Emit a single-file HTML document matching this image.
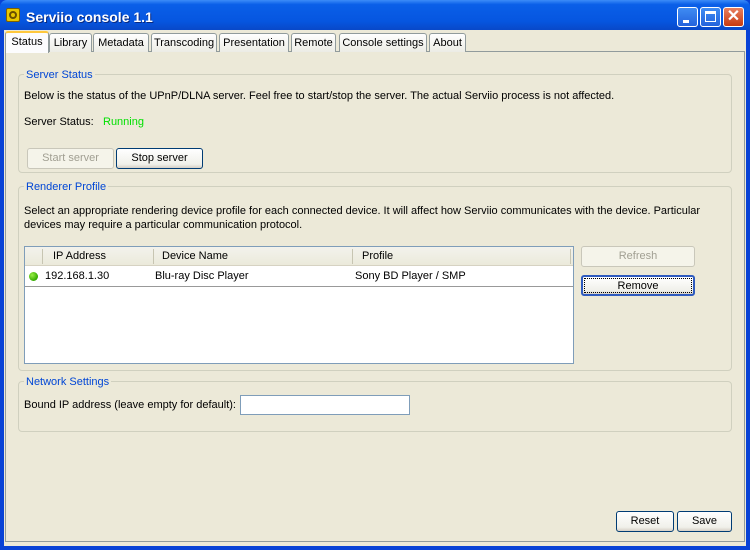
<!DOCTYPE html>
<html><head><style>
*{box-sizing:border-box;margin:0;padding:0}
body{width:750px;height:550px;overflow:hidden;font:11px "Liberation Sans",sans-serif;color:#000;background:#0842d6;position:relative}
.a{position:absolute}
#title{left:0;top:0;width:750px;height:30px;background:linear-gradient(#3c8cf8 0,#0a5fe8 15%,#0656e0 70%,#0848c8 100%);border-radius:7px 7px 0 0}
#client{left:4px;top:30px;width:742px;height:516px;background:#ece9d8}
.wb{top:7px;width:21px;height:20px;border:1px solid #fff;border-radius:3px;background:linear-gradient(#3f8cf3,#2463dc)}
.tab{top:33px;height:19px;border:1px solid #919b9c;border-bottom:none;border-radius:3px 3px 0 0;background:linear-gradient(#fff,#ececE5);text-align:center;line-height:18px}
.grp{border:1px solid #d0d0bf;border-radius:4px}
.gt{background:#ece9d8;color:#0046d5;padding:0 2px}
.btn{height:21px;border:1px solid #003c74;border-radius:3px;background:linear-gradient(#fff,#f0f0ea 80%,#d6d0c5);text-align:center;line-height:19px}
.dis{border-color:#c9c7ba;color:#a19f92;background:#f5f4ea}
</style></head><body>
<div id="title" class="a"></div>
<div class="a" style="left:6px;top:8px;width:14px;height:14px;background:#e8c800;border:1px solid #806000;border-radius:2px"><div style="margin:2px;width:8px;height:8px;border:2px solid #6a5000;border-radius:50%"></div></div>
<div class="a" style="left:26px;top:9px;color:#fff;font-weight:bold;font-size:14px;text-shadow:1px 1px #0a2a80">Serviio console 1.1</div>
<div class="a wb" style="left:677px"><div class="a" style="left:5px;top:12px;width:6px;height:3px;background:#fff"></div></div>
<div class="a wb" style="left:700px"><div class="a" style="left:4px;top:3px;width:11px;height:11px;border:1px solid #fff;border-top-width:3px"></div></div>
<div class="a wb" style="left:723px;background:linear-gradient(#e88060,#c83a10);color:#fff;font-size:16px;font-weight:bold;text-align:center;line-height:18px">✕</div>
<div id="client" class="a"></div>
<div class="a" style="left:5px;top:51px;width:740px;height:491px;border:1px solid #919b9c;background:#ece9d8"></div>
<div class="a tab" style="left:49px;width:43px">Library</div>
<div class="a tab" style="left:93px;width:56px">Metadata</div>
<div class="a tab" style="left:151px;width:66px">Transcoding</div>
<div class="a tab" style="left:219px;width:70px">Presentation</div>
<div class="a tab" style="left:291px;width:45px">Remote</div>
<div class="a tab" style="left:339px;width:88px">Console settings</div>
<div class="a tab" style="left:429px;width:37px">About</div>
<div class="a tab" style="left:5px;top:31px;width:44px;height:22px;background:#fcfcfe;border-top:2px solid #ffc83c;line-height:18px">Status</div>

<div class="a grp" style="left:18px;top:74px;width:714px;height:99px"></div>
<div class="a gt" style="left:24px;top:69px">Server Status</div>
<div class="a" style="left:24px;top:90px">Below is the status of the UPnP/DLNA server. Feel free to start/stop the server. The actual Serviio process is not affected.</div>
<div class="a" style="left:24px;top:116px">Server Status:</div>
<div class="a" style="left:103px;top:116px;color:#00e000">Running</div>
<div class="a btn dis" style="left:27px;top:148px;width:87px">Start server</div>
<div class="a btn" style="left:116px;top:148px;width:87px">Stop server</div>

<div class="a grp" style="left:18px;top:186px;width:714px;height:185px"></div>
<div class="a gt" style="left:24px;top:181px">Renderer Profile</div>
<div class="a" style="left:24px;top:204px;width:686px;line-height:14px">Select an appropriate rendering device profile for each connected device. It will affect how Serviio communicates with the device. Particular devices may require a particular communication protocol.</div>
<div class="a" style="left:24px;top:246px;width:550px;height:118px;border:1px solid #7f9db9;background:#fff"></div>
<div class="a" style="left:25px;top:247px;width:548px;height:19px;background:linear-gradient(#f3f2ec,#ebeadb);border-bottom:1px solid #d6d2c2"></div>
<div class="a" style="left:42px;top:249px;width:1px;height:15px;background:#c7c5b2"></div>
<div class="a" style="left:153px;top:249px;width:1px;height:15px;background:#c7c5b2"></div>
<div class="a" style="left:352px;top:249px;width:1px;height:15px;background:#c7c5b2"></div>
<div class="a" style="left:570px;top:249px;width:1px;height:15px;background:#c7c5b2"></div>
<div class="a" style="left:53px;top:250px">IP Address</div>
<div class="a" style="left:162px;top:250px">Device Name</div>
<div class="a" style="left:362px;top:250px">Profile</div>
<div class="a" style="left:25px;top:286px;width:548px;height:1px;background:#999"></div>
<div class="a" style="left:29px;top:272px;width:9px;height:9px;border-radius:50%;background:radial-gradient(circle at 35% 35%,#9e4,#3a0 70%)"></div>
<div class="a" style="left:45px;top:270px">192.168.1.30</div>
<div class="a" style="left:155px;top:270px">Blu-ray Disc Player</div>
<div class="a" style="left:355px;top:270px">Sony BD Player / SMP</div>
<div class="a btn dis" style="left:581px;top:246px;width:114px">Refresh</div>
<div class="a btn" style="left:581px;top:275px;width:114px;border-width:2px;border-color:#2f5bbf;padding:1px"><div style="border:1px dotted #000;height:15px;line-height:14px">Remove</div></div>

<div class="a grp" style="left:18px;top:381px;width:714px;height:51px"></div>
<div class="a gt" style="left:24px;top:376px">Network Settings</div>
<div class="a" style="left:24px;top:399px">Bound IP address (leave empty for default):</div>
<div class="a" style="left:240px;top:395px;width:170px;height:20px;border:1px solid #7f9db9;background:#fff"></div>

<div class="a btn" style="left:616px;top:511px;width:58px">Reset</div>
<div class="a btn" style="left:677px;top:511px;width:55px">Save</div>
</body></html>
